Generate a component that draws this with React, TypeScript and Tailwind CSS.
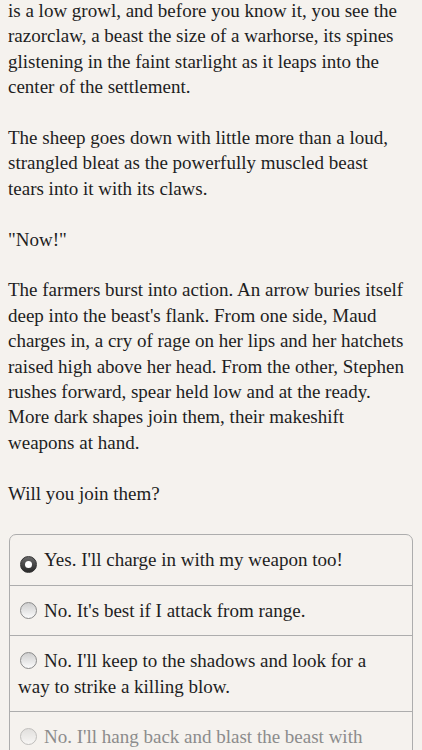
import React from 'react';

const story: string[][] = [
  [
    'is a low growl, and before you know it, you see the',
    'razorclaw, a beast the size of a warhorse, its spines',
    'glistening in the faint starlight as it leaps into the',
    'center of the settlement.',
  ],
  [
    'The sheep goes down with little more than a loud,',
    'strangled bleat as the powerfully muscled beast',
    'tears into it with its claws.',
  ],
  ['"Now!"'],
  [
    'The farmers burst into action. An arrow buries itself',
    "deep into the beast's flank. From one side, Maud",
    'charges in, a cry of rage on her lips and her hatchets',
    'raised high above her head. From the other, Stephen',
    'rushes forward, spear held low and at the ready.',
    'More dark shapes join them, their makeshift',
    'weapons at hand.',
  ],
  ['Will you join them?'],
];

const choices = [
  { lines: ["Yes. I'll charge in with my weapon too!"], selected: true },
  { lines: ["No. It's best if I attack from range."] },
  { lines: ["No. I'll keep to the shadows and look for a", 'way to strike a killing blow.'] },
  { lines: ["No. I'll hang back and blast the beast with"], faded: true },
];

function Radio({ selected, faded }: { selected?: boolean; faded?: boolean }) {
  if (selected) {
    return (
      <span className="inline-flex w-[17px] h-[17px] rounded-full bg-gradient-to-b from-[#6a6a6a] to-[#2a2a2a] border border-[#333] items-center justify-center align-[-2px] ml-[2px] mr-[7px]">
        <span className="w-[7px] h-[7px] rounded-full bg-white" />
      </span>
    );
  }
  return (
    <span
      className={
        'inline-block w-[17px] h-[17px] rounded-full bg-gradient-to-b from-[#cfcfcf] to-[#fbfbfb] border border-[#8a8a8a] align-[-2px] ml-[2px] mr-[7px] ' +
        (faded ? 'opacity-50' : '')
      }
    />
  );
}

export default function App() {
  return (
    <div
      className="w-[422px] h-[750px] overflow-hidden bg-[#f5f2ee] text-[#1e1e1e] text-[19px] leading-[25.4px]"
      style={{ fontFamily: '"Liberation Serif", serif' }}
    >
      <div className="px-[8px] -mt-[2px] flex flex-col gap-[25.4px]">
        {story.map((p, i) => (
          <p key={i}>
            {p.map((l, j) => (
              <span key={j} className="block whitespace-nowrap">
                {l}
              </span>
            ))}
          </p>
        ))}
      </div>

      <div className="mx-[9px] mt-[28px] border border-[#adadad] rounded-t-[7px] overflow-hidden">
        {choices.map((c, i) => (
          <div
            key={i}
            className={
              'pl-[8px] pr-2 py-[12px] ' +
              (i > 0 ? 'border-t border-[#adadad] ' : '') +
              (c.faded ? 'text-[#8c8c8c]' : '')
            }
          >
            {c.lines.map((l, j) => (
              <span key={j} className="block whitespace-nowrap">
                {j === 0 && <Radio selected={c.selected} faded={c.faded} />}
                {l}
              </span>
            ))}
          </div>
        ))}
      </div>
    </div>
  );
}
